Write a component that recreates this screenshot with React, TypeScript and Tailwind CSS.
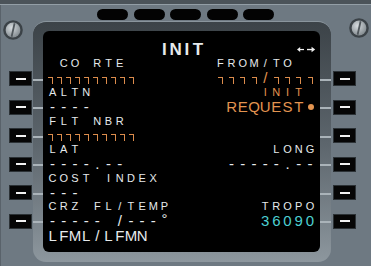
import React from 'react';

type Size = 'S' | 'L' | 'T';
type Seg = { col: number; text: string; size: Size; color: string };

const W = 'text-[#e6eaec]';
const O = 'text-[#e39450]';
const C = 'text-[#4ccfd2]';

const sizeCls: Record<Size, string> = {
  S: 'text-[11px] leading-[11px]',
  L: 'text-[15px] leading-[14px]',
  T: 'text-[17px] leading-[14px] font-bold',
};

function Bracket() {
  return (
    <span className="inline-block w-[5px] h-[7px] border-t-[1.5px] border-r-[1.5px] border-[#dc8c4c] translate-y-[2px]" />
  );
}

function ArrowL() {
  return (
    <svg width="9" height="7" viewBox="0 0 9 7" className="inline-block ml-[4px]">
      <polygon points="0,3.5 4,0.5 4,6.5" fill="#f0f0f0" />
      <rect x="3" y="2.8" width="6" height="1.5" fill="#f0f0f0" />
    </svg>
  );
}

function ArrowR() {
  return (
    <svg width="9" height="7" viewBox="0 0 9 7" className="inline-block ml-[3px]">
      <polygon points="9,3.5 5,0.5 5,6.5" fill="#f0f0f0" />
      <rect x="0" y="2.8" width="6" height="1.5" fill="#f0f0f0" />
    </svg>
  );
}

function renderChar(ch: string) {
  if (ch === '#') return <Bracket />;
  if (ch === '*') return <span className="inline-block w-[6px] h-[6px] rounded-full bg-[#e39450] ml-[2px]" />;
  if (ch === '<') return <ArrowL />;
  if (ch === '>') return <ArrowR />;
  if (ch === '°') return <span className="relative top-[-2px]">°</span>;
  if (ch === ' ') return null;
  return ch;
}

function Row({ segs, lead }: { segs: Seg[]; lead?: React.ReactNode }) {
  const cells: ({ ch: string; size: Size; color: string } | null)[] = Array(24).fill(null);
  segs.forEach((s) => {
    [...s.text].forEach((ch, i) => {
      cells[s.col + i] = { ch, size: s.size, color: s.color };
    });
  });
  const start = lead ? 15 : 0;
  return (
    <div className="h-[14.3px] flex items-center">
      {lead ? <div className="w-[168px] shrink-0 flex items-center">{lead}</div> : null}
      {cells.slice(start).map((c, i) => (
        <span
          key={i}
          className={
            'w-[11.2px] shrink-0 text-center whitespace-nowrap flex justify-center items-center ' +
            (c ? sizeCls[c.size] + ' ' + c.color : '')
          }
        >
          {c ? renderChar(c.ch) : null}
        </span>
      ))}
    </div>
  );
}

function NarrowBoxes() {
  return (
    <div className="flex gap-[4px] pl-[1px]">
      {Array.from({ length: 10 }).map((_, i) => (
        <Bracket key={i} />
      ))}
    </div>
  );
}

function Screw({ id }: { id: string }) {
  return (
    <svg width="20" height="20" viewBox="0 0 20 20">
      <defs>
        <radialGradient id={id} cx="40%" cy="35%" r="70%">
          <stop offset="0%" stopColor="#d7dcdf" />
          <stop offset="100%" stopColor="#80888d" />
        </radialGradient>
      </defs>
      <circle cx="10" cy="10" r="9.8" fill="#3b4247" />
      <circle cx="10" cy="10" r="7.4" fill={`url(#${id})`} />
      <line x1="11.6" y1="3.2" x2="8.6" y2="16.8" stroke="#50575c" strokeWidth="1.8" />
    </svg>
  );
}

function Lsk() {
  return (
    <div className="w-[23px] h-[15px] bg-[#060606] border border-[#2c3236] flex items-center justify-center">
      <div className="w-[10px] h-[2px] bg-[#f2f2f2]" />
    </div>
  );
}

function Rail({ w }: { w: string }) {
  return (
    <div className={'flex flex-col pt-[56.5px] gap-[26.6px] shrink-0 ' + w}>
      {Array.from({ length: 6 }).map((_, i) => (
        <div key={i} className="h-[2px] bg-[#aab3b9]" />
      ))}
    </div>
  );
}

export default function App() {
  const rows: { segs: Seg[]; lead?: React.ReactNode }[] = [
    {
      segs: [
        { col: 10, text: 'INIT', size: 'T', color: W },
        { col: 22, text: '<>', size: 'S', color: W },
      ],
    },
    {
      segs: [
        { col: 1, text: 'CO RTE', size: 'S', color: W },
        { col: 15, text: 'FROM/TO', size: 'S', color: W },
      ],
    },
    { segs: [{ col: 15, text: '####/####', size: 'L', color: O }], lead: <NarrowBoxes /> },
    {
      segs: [
        { col: 0, text: 'ALTN', size: 'S', color: W },
        { col: 19, text: 'INIT', size: 'S', color: O },
      ],
    },
    {
      segs: [
        { col: 0, text: '----', size: 'L', color: W },
        { col: 16, text: 'REQUEST*', size: 'L', color: O },
      ],
    },
    { segs: [{ col: 0, text: 'FLT NBR', size: 'S', color: W }] },
    { segs: [], lead: <NarrowBoxes /> },
    {
      segs: [
        { col: 0, text: 'LAT', size: 'S', color: W },
        { col: 20, text: 'LONG', size: 'S', color: W },
      ],
    },
    {
      segs: [
        { col: 0, text: '----.--', size: 'L', color: W },
        { col: 16, text: '-----.--', size: 'L', color: W },
      ],
    },
    { segs: [{ col: 0, text: 'COST INDEX', size: 'S', color: W }] },
    { segs: [{ col: 0, text: '---', size: 'L', color: W }] },
    {
      segs: [
        { col: 0, text: 'CRZ FL/TEMP', size: 'S', color: W },
        { col: 19, text: 'TROPO', size: 'S', color: W },
      ],
    },
    {
      segs: [
        { col: 0, text: '----- /---°', size: 'L', color: W },
        { col: 19, text: '36090', size: 'L', color: C },
      ],
    },
    { segs: [{ col: 0, text: 'LFML/LFMN', size: 'L', color: W }] },
  ];

  return (
    <div className="w-[371px] h-[266px] bg-[#6e7982] flex flex-col overflow-hidden font-['Liberation_Sans',Arial,sans-serif]">
      <div className="h-[4px] bg-[#4b5359] shrink-0" />
      <div className="h-[1px] bg-[#939ea6] shrink-0" />
      <div className="flex flex-1">
        {/* left column */}
        <div className="w-[33px] shrink-0 flex flex-col border-l border-[#59626a]">
          <div className="mt-[15px] ml-[2px] w-[20px] h-[20px]">
            <Screw id="sl" />
          </div>
          <div className="mt-[31px] ml-[8px] flex flex-col gap-[13.6px]">
            {Array.from({ length: 6 }).map((_, i) => (
              <Lsk key={i} />
            ))}
          </div>
        </div>

        {/* middle */}
        <div className="w-[298px] shrink-0 flex flex-col">
          <div className="h-[16px] pt-[4px] pl-[64px] flex gap-[5.5px] shrink-0">
            {Array.from({ length: 5 }).map((_, i) => (
              <div key={i} className="w-[31px] h-[11px] rounded-full bg-[#030303]" />
            ))}
          </div>
          <div className="h-[241px] rounded-[13px] bg-gradient-to-b from-[#3c4348] via-[#5c656c] to-[#8d979e] border-t border-[#8a959d] flex shrink-0">
            <Rail w="w-[10px]" />
            <div className="w-[277px] h-[221px] mt-[9px] bg-black rounded-[6px] pl-[4px] pt-[11.5px] flex flex-col shrink-0">
              {rows.map((r, i) => (
                <Row key={i} segs={r.segs} lead={r.lead} />
              ))}
            </div>
            <Rail w="w-[11px]" />
          </div>
        </div>

        {/* right column */}
        <div className="w-[40px] shrink-0 flex flex-col">
          <div className="mt-[13px] ml-[18px] w-[20px] h-[20px]">
            <Screw id="sr" />
          </div>
          <div className="mt-[33px] ml-[2px] flex flex-col gap-[13.6px]">
            {Array.from({ length: 6 }).map((_, i) => (
              <Lsk key={i} />
            ))}
          </div>
        </div>
      </div>
    </div>
  );
}
